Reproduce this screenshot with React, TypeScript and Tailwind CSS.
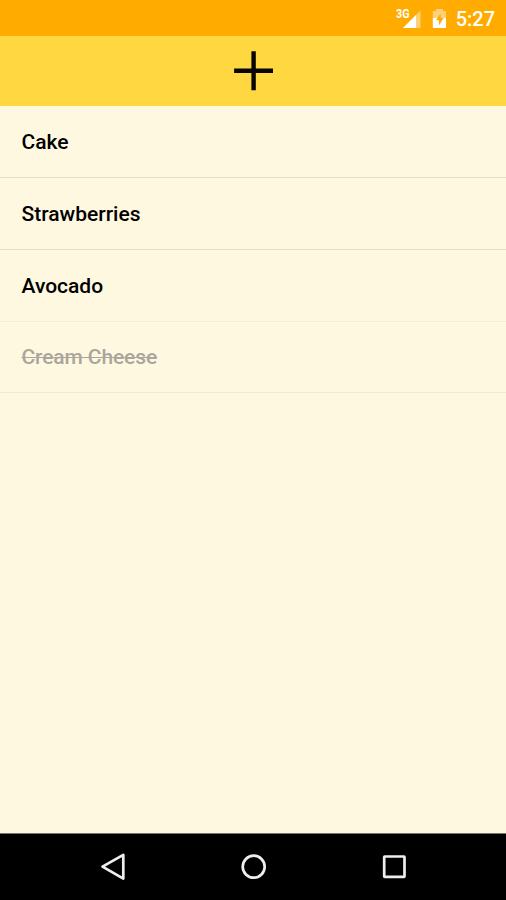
const items = [
  { name: 'Cake', done: false, line: 'border-[#eadfcb]', h: 'h-[72px]' },
  { name: 'Strawberries', done: false, line: 'border-[#e7dcc8]', h: 'h-[72px]' },
  { name: 'Avocado', done: false, line: 'border-[#f4ead7]', h: 'h-[72px]' },
  { name: 'Cream Cheese', done: true, line: 'border-[#f2e8d5]', h: 'h-[71px]' },
];

function StatusBar() {
  return (
    <header className="flex h-[36px] shrink-0 items-center justify-end bg-[#ffab00] pr-[11px] text-white">
      <svg width="28" height="24" viewBox="0 0 28 24" className="mr-[8px]">
        <path d="M24.5 4.5V22H7Z" fill="#ffd07a" />
        <path d="M20 9V22H7Z" fill="#fff" />
        <text x="0" y="11.5" fontSize="12.5" fontWeight="700" fill="#fff" fontFamily="'Roboto', sans-serif" textLength="13.5" lengthAdjust="spacingAndGlyphs">3G</text>
      </svg>
      <svg width="14" height="22" viewBox="0 0 14 22" className="mr-[10px]">
        <path d="M.8 4H4V2H11V4H14V11H.8Z" fill="#ffd07a" />
        <path d="M.8 11H14V21H.8Z" fill="#fff" />
        <path d="M8.6 6.5L4 13.2H6.9V18.5L11.6 11H8.6Z" fill="#ffab00" />
      </svg>
      <span className="pt-px text-[20px] leading-[24px] font-medium">5:27</span>
    </header>
  );
}

export default function App() {
  return (
    <div className="flex h-[900px] w-[506px] flex-col overflow-hidden bg-[#fff8e1] font-['Roboto',sans-serif]">
      <StatusBar />
      <button aria-label="Add item" className="flex h-[70px] w-full shrink-0 items-center justify-center bg-[#ffd740]">
        <svg width="40" height="40" viewBox="0 0 40 40" fill="none" stroke="#080600" strokeWidth="4.4">
          <path d="M20.6 .2V39.2M1.1 19.7H40" />
        </svg>
      </button>
      <ul className="flex-1">
        {items.map((item) => (
          <li key={item.name} className={`flex items-center border-b pl-[21.5px] text-[21px] font-medium ${item.h} ${item.line} ${item.done ? 'tracking-[-0.12px] text-[#aaa69b] line-through decoration-1' : 'text-black'}`}>
            <span className={item.done ? 'pt-[2px]' : 'pt-[3px]'}>{item.name}</span>
          </li>
        ))}
      </ul>
      <nav className="flex h-[67px] shrink-0 items-center border-t border-[#77746a] bg-black">
        <svg width="506" height="66" viewBox="0 0 506 66" fill="none" stroke="#eee" strokeWidth="2.7" strokeLinejoin="round">
          <path d="M102.5 32.7L123.3 20.8V44.6Z" />
          <circle cx="253.7" cy="32.7" r="11" />
          <rect x="384.2" y="22.5" width="20.3" height="20.3" rx=".5" />
        </svg>
      </nav>
    </div>
  );
}
